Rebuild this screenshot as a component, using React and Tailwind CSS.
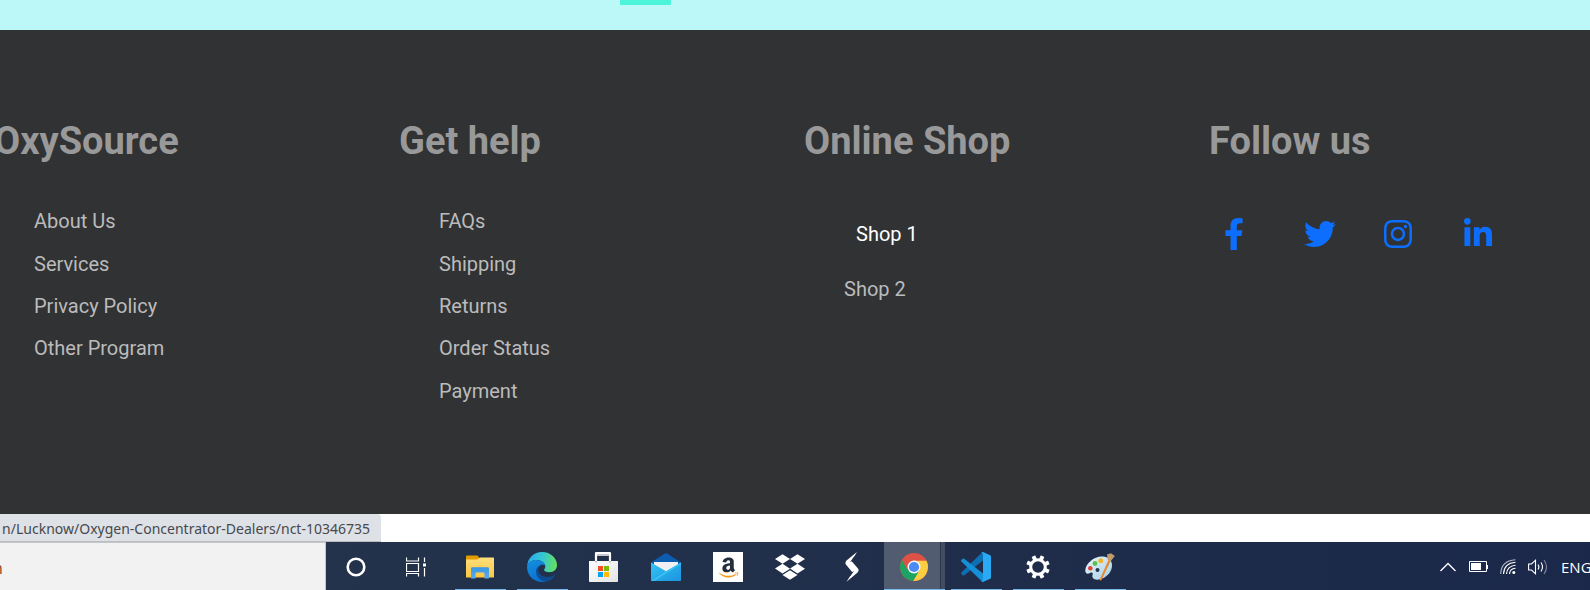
import React from "react";
import { FaFacebookF, FaTwitter, FaInstagram, FaLinkedinIn, FaAmazon, FaDropbox } from "react-icons/fa";

function LinkColumn({ title, links }) {
  return (
    <section>
      <Heading>{title}</Heading>
      <ul className="mt-9 grid h-[212px] grid-rows-5 pl-10">
        {links.map((l) => (
          <li key={l} className="flex items-center">
            <a href="#" className="text-xl leading-7 text-[#bbbbbb]">{l}</a>
          </li>
        ))}
      </ul>
    </section>
  );
}

function Heading({ children }) {
  return <h2 className="pt-0.5 text-[38px] leading-[46px] font-bold text-[#999999]">{children}</h2>;
}

const socials = [
  { name: "Facebook", Icon: FaFacebookF, size: "h-8 w-5" },
  { name: "Twitter", Icon: FaTwitter, size: "h-8 w-8" },
  { name: "Instagram", Icon: FaInstagram, size: "h-8 w-7" },
  { name: "LinkedIn", Icon: FaLinkedinIn, size: "h-8 w-7" },
];

function Cortana() {
  return (
    <svg viewBox="0 0 20 20" className="size-5" fill="none">
      <circle cx="10" cy="10" r="8.3" stroke="#fff" strokeWidth="2.6" />
    </svg>
  );
}

function TaskView() {
  return (
    <svg viewBox="0 0 24 20" className="h-5 w-6" fill="none" stroke="#fff" strokeWidth="1.2">
      <path d="M.5 .5V4H12.500V.5M.5 6.500H12.500V14.500H.5ZM.5 19.500V16.500H12.500V19.500M18.500 .5V5M18.500 11V19.500" />
      <rect x="17" y="6.500" width="3" height="3" fill="#fff" stroke="none" />
    </svg>
  );
}

function Folder() {
  return (
    <svg viewBox="0 0 28 24" className="h-6 w-7">
      <defs>
        <linearGradient id="folder" x1="0" y1="0" x2="0" y2="1">
          <stop offset="0" stopColor="#ffdf7c" />
          <stop offset="1" stopColor="#fbc540" />
        </linearGradient>
        <linearGradient id="folderClip" x1="0" y1="0" x2="0" y2="1">
          <stop offset="0" stopColor="#3a97e0" />
          <stop offset="1" stopColor="#57aef0" />
        </linearGradient>
      </defs>
      <path d="M0 1.500Q0 .5 1 .5H11.500L13.500 3V6H0Z" fill="#e29c00" />
      <path d="M0 4.500H11.500L14 2.500H27.200Q28 2.500 28 3.300V22.500H0Z" fill="url(#folder)" />
      <path d="M5 13.500Q5 12.300 6.200 12.300H21.800Q23 12.300 23 13.500V23.500H18.500V18.500Q18.500 17.500 17.500 17.500H10.500Q9.500 17.500 9.500 18.500V23.500H5Z" fill="url(#folderClip)" />
    </svg>
  );
}

function Edge() {
  return (
    <svg viewBox="0 0 30 30" className="size-[30px]">
      <defs>
        <linearGradient id="edgeTop" x1="0" y1=".4" x2="1" y2=".5">
          <stop offset="0" stopColor="#2aa8e8" />
          <stop offset=".5" stopColor="#35c7d4" />
          <stop offset="1" stopColor="#67e05b" />
        </linearGradient>
        <linearGradient id="edgeLeft" x1=".2" y1="0" x2=".6" y2="1">
          <stop offset="0" stopColor="#148ee0" />
          <stop offset="1" stopColor="#0a70cc" />
        </linearGradient>
        <linearGradient id="edgeLow" x1="0" y1="0" x2="1" y2=".5">
          <stop offset="0" stopColor="#0b4ea0" />
          <stop offset="1" stopColor="#104a8c" />
        </linearGradient>
      </defs>
      <path d="M.2 14C.7 5.800 7 0 15 0C24 0 30 6.500 30 13C30 17.500 26.800 20.200 22.500 20.200C19.200 20.200 17 19 17 18C17 17.200 18.300 16.500 18.300 14.500C18.300 11 14.500 8 9.500 8C5 8 1.500 10.500 .2 14Z" fill="url(#edgeTop)" />
      <path d="M0 15C.7 10.700 4.800 8 9.500 8C14.500 8 18.300 11 18.300 14C16.500 11.500 10.500 13 10.500 18.500C10.500 24 15 29 19.500 29.200C18 29.800 16.500 30 15 30C6.800 30 0 23.500 0 15Z" fill="url(#edgeLeft)" />
      <path d="M12.500 13.400C9.500 18 12 25 20.500 25C23.500 25 26 24 27.500 23C28.300 22.500 28.500 23 28 23.700C25.800 27 22.800 29 19.500 29.500C13 29.500 9 24.500 9 19.500C9 16.500 10.500 14.300 12.500 13.400Z" fill="url(#edgeLow)" />
    </svg>
  );
}

function Store() {
  return (
    <svg viewBox="0 0 30 30" className="size-[30px]">
      <defs>
        <linearGradient id="bag" x1="0" y1="0" x2="1" y2="1">
          <stop offset="0" stopColor="#fff" />
          <stop offset="1" stopColor="#e3e3e3" />
        </linearGradient>
      </defs>
      <path d="M7 9V1.500Q7 1 7.500 1H20.500Q21 1 21 1.500V9" fill="none" stroke="#fff" strokeWidth="2.200" />
      <path d="M8 2H20V4H8Z" fill="#c5c9cf" />
      <path d="M0 9H29V29.200Q29 30 28.200 30H.8Q0 30 0 29.200Z" fill="url(#bag)" />
      <path d="M6 9h2v1.500H6ZM20 9h2v1.500H20Z" fill="#b9bec6" />
      <path d="M9 14h5v5H9Z" fill="#f25022" />
      <path d="M15 14h5v5h-5Z" fill="#7fba00" />
      <path d="M9 20h5v5H9Z" fill="#00a4ef" />
      <path d="M15 20h5v5h-5Z" fill="#ffb900" />
    </svg>
  );
}

function Mail() {
  return (
    <svg viewBox="0 0 30 28" className="h-7 w-[30px]">
      <defs>
        <linearGradient id="mail" x1="0" y1="0" x2="1" y2="1">
          <stop offset="0" stopColor="#35c4f5" />
          <stop offset="1" stopColor="#1b93df" />
        </linearGradient>
      </defs>
      <path d="M0 9.500L13.500 .8Q15 -.1 16.500 .8L30 9.500V14H0Z" fill="#0c5cb0" />
      <path d="M3 9H27V20H3Z" fill="#f1f1f3" />
      <path d="M0 9.500L15 18.300L30 9.500V27.200Q30 28 29.200 28H.8Q0 28 0 27.200Z" fill="url(#mail)" />
      <path d="M.3 28L15 18.300L30 9.500V11L3 28Z" fill="#41cdf7" opacity=".7" />
    </svg>
  );
}

function Amazon() {
  return (
    <span className="grid size-[30px] place-items-center bg-white">
      <FaAmazon className="col-start-1 row-start-1 size-[23px] text-[#222e3e] [clip-path:inset(0_0_28%_0)]" />
      <FaAmazon className="col-start-1 row-start-1 size-[23px] text-[#f8981d] [clip-path:inset(72%_0_0_0)]" />
    </span>
  );
}

function Dropbox() {
  return <FaDropbox className="size-[30px] text-white" />;
}

function Bolt() {
  return (
    <svg viewBox="0 0 14 30" className="h-[30px] w-3.5" fill="#fff">
      <path d="M12 0L1.500 8.500Q-.3 10.500 .9 12.500L7.500 20.500L1.500 29.800L12 21Q14.500 18.700 13 16.500L6.500 9Z" />
      <path d="M5.800 9.800L9.500 4.500M4.800 24L8.200 19.500" stroke="#24324c" strokeWidth="1" />
    </svg>
  );
}

function Chrome() {
  return (
    <svg viewBox="0 0 28 28" className="size-7">
      <circle cx="14" cy="14" r="14" fill="#de5246" />
      <path d="M1.900 7A14 14 0 0 0 13.300 28L20 17.500L14 14L8 17.500Z" fill="#1da463" />
      <path d="M14 7.700H26.500A14 14 0 0 1 13.300 28L19.500 17.200L14 14Z" fill="#ffcd41" />
      <circle cx="14" cy="14" r="6.500" fill="#f4f7fb" />
      <circle cx="14" cy="14" r="5.100" fill="#4c8bf5" />
    </svg>
  );
}

function VSCode() {
  return (
    <svg viewBox="0 0 30 30" className="size-[30px]">
      <path d="M22 0V8.500L3.200 23.200Q2.500 23.700 1.800 23.200L.4 21.900Q-.3 21.200 .4 20.500L20.500 1Z" fill="#0d6fb4" />
      <path d="M22 30V21.500L3.200 6.800Q2.500 6.300 1.800 6.800L.4 8.100Q-.3 8.800 .4 9.500L20.500 29Z" fill="#148fd8" />
      <path d="M22 0L29.200 3.300Q30 3.700 30 4.600V25.400Q30 26.300 29.200 26.700L22 30Q20.800 30 20.300 29Q22 29.500 22 27.500V2.500Q22 .5 20.300 1Q20.800 0 22 0Z" fill="#2aa9f5" />
    </svg>
  );
}

function Gear() {
  return (
    <svg viewBox="0 0 24 24" className="size-6" fill="#fff">
      <circle cx="12" cy="12" r="7.300" fill="none" stroke="#fff" strokeWidth="3" />
      {[22.5, 67.5, 112.5, 157.5, 202.5, 247.5, 292.5, 337.5].map((a) => (
        <rect key={a} x="10" y=".2" width="4" height="4.600" rx=".6" transform={"rotate(" + a + " 12 12)"} />
      ))}
    </svg>
  );
}

function Paint() {
  return (
    <svg viewBox="0 0 30 28" className="h-7 w-[30px]">
      <defs>
        <linearGradient id="palette" x1="0" y1="0" x2="1" y2="1">
          <stop offset="0" stopColor="#e9f6fb" />
          <stop offset="1" stopColor="#a5cfe4" />
        </linearGradient>
      </defs>
      <path d="M18 3.500C9 3 .8 10.500 .3 17C0 20.500 2.500 21.500 5 20C7 18.800 8.500 20 7.500 22C6.500 25 9.500 27.500 14 26.500C22 25 27.500 18 27 11.500C26.500 6.500 23 3.800 18 3.500Z" fill="url(#palette)" />
      <circle cx="12.500" cy="17" r="2" fill="#23344c" />
      <circle cx="5.300" cy="15.200" r="2.300" fill="#e2433a" />
      <circle cx="10" cy="10.500" r="2.400" fill="#5bbf4c" />
      <circle cx="15.800" cy="7.800" r="2.500" fill="#f3b42a" />
      <path d="M23.500 7L25.500 8L16.500 27Q15 28.500 14.800 26.500Z" fill="#e8862c" />
      <path d="M22 1.500L26 .2L29.800 3L25.500 8.500L22.800 6.800Z" fill="#c39a6b" />
    </svg>
  );
}

const apps = [
  { name: "Cortana", Icon: Cortana },
  { name: "Task View", Icon: TaskView },
  { name: "File Explorer", Icon: Folder, open: true },
  { name: "Microsoft Edge", Icon: Edge, open: true },
  { name: "Microsoft Store", Icon: Store },
  { name: "Mail", Icon: Mail },
  { name: "Amazon", Icon: Amazon },
  { name: "Dropbox", Icon: Dropbox },
  { name: "Bolt", Icon: Bolt },
  { name: "Google Chrome", Icon: Chrome, active: true },
  { name: "Visual Studio Code", Icon: VSCode, open: true },
  { name: "Settings", Icon: Gear, open: true },
  { name: "Paint", Icon: Paint, open: true },
];

function AppButton({ name, Icon, open, active }) {
  if (active) {
    return (
      <button aria-label={name} className="ml-px flex w-[61px] shrink-0 border-b border-[#76b9ed]">
        <span className="flex h-full flex-1 items-center justify-center bg-[#525c70] pt-0.5 pl-1">
          <Icon />
        </span>
        <span className="h-full w-[5px] border-l border-[#2b364b] bg-[#434c60]" />
      </button>
    );
  }
  return (
    <button aria-label={name} className="flex w-[62px] shrink-0 flex-col items-center">
      <span className="flex w-full flex-1 items-center justify-center pt-[3px]">
        <Icon />
      </span>
      <span className={open ? "h-px w-[51px] bg-[#76b9ed]" : "h-px w-[51px]"} />
    </button>
  );
}

function Tray() {
  return (
    <div className="flex w-[150px] shrink-0 items-center overflow-hidden pt-0.5 text-white">
      <button aria-label="Show hidden icons" className="shrink-0">
        <svg viewBox="0 0 16 10" className="h-2.5 w-4" fill="none" stroke="#fff" strokeWidth="1.300">
          <path d="M.5 9L8 1.500L15.500 9" />
        </svg>
      </button>
      <svg viewBox="0 0 19 12" className="ml-[13px] h-3 w-[19px] shrink-0" fill="none" stroke="#fff">
        <path d="M.5 .5H17.500V10.500H.5Z" />
        <path d="M2 2H12V9H2Z" fill="#fff" stroke="none" />
        <path d="M18.500 4V8" />
      </svg>
      <svg viewBox="0 0 16 16" className="ml-3 size-4 shrink-0" fill="none" stroke="#fff" strokeWidth="1.100">
        <circle cx="13.800" cy="13.500" r="1.500" fill="#fff" stroke="none" />
        <path d="M9.500 15Q9.800 9.800 15.500 9.300M6.500 15Q7 7 15.500 6.200M3.500 15Q4 4.200 15.500 3.300" />
        <path d="M.7 15Q1 1.700 15.500 .7" opacity=".65" />
      </svg>
      <svg viewBox="0 0 20 18" className="ml-3 h-[18px] w-5 shrink-0" fill="none" stroke="#fff" strokeWidth="1.100">
        <path d="M.6 6H3.500L7.500 2.200V15.800L3.500 12H.6Z" />
        <path d="M10 6.500Q11.800 9 10 11.500M13 4.500Q16 9 13 13.500" />
        <path d="M16 2Q21 9 16 16" opacity=".45" />
      </svg>
      <span className="ml-[13px] font-['Open_Sans',sans-serif] text-[15px] leading-5">ENG</span>
    </div>
  );
}

export default function App() {
  return (
    <div className="min-h-screen overflow-hidden bg-white font-['Roboto',sans-serif]">
      <div className="h-[30px] bg-[#bcf8f8] pl-[39%]">
        <div className="h-[5px] w-[51px] bg-[#4cf4da]" />
      </div>

      <footer className="bg-[#313234] pt-[86px] pb-[102px]">
        <div className="-mr-6 -ml-1.5 grid grid-cols-4">
          <LinkColumn title="OxySource" links={["About Us", "Services", "Privacy Policy", "Other Program"]} />
          <LinkColumn title="Get help" links={["FAQs", "Shipping", "Returns", "Order Status", "Payment"]} />
          <section>
            <Heading>Online Shop</Heading>
            <ul className="mt-[42px] pl-10 text-xl">
              <li className="flex h-[55px] items-center pl-3">
                <a href="#" className="text-white">Shop 1</a>
              </li>
              <li className="flex h-[55px] items-center">
                <a href="#" className="text-[#bbbbbb]">Shop 2</a>
              </li>
            </ul>
          </section>
          <section>
            <Heading>Follow us</Heading>
            <div className="mt-[54px] flex pl-[15px]">
              {socials.map(({ name, Icon, size }) => (
                <a key={name} href="#" aria-label={name} className="w-20 text-[#0d6efd]">
                  <Icon className={size} />
                </a>
              ))}
            </div>
          </section>
        </div>
      </footer>

      <div className="flex h-7">
        <div className="flex w-[381px] items-center justify-end overflow-hidden rounded-tr-sm border-b border-[#babcbf] bg-[#dee1e6] pt-0.5 pr-[11px] font-['Noto_Sans',sans-serif] text-sm whitespace-nowrap text-[#46494d]">
          n/Lucknow/Oxygen-Concentrator-Dealers/nct-10346735
        </div>
      </div>

      <div className="flex h-12 bg-linear-to-r from-[#24334b] from-20% to-[#1b284a]">
        <input
          aria-label="Search"
          defaultValue="n"
          className="-mr-px w-[326px] shrink-0 border-t border-r border-[#c4c6c9] bg-[#f2f2f2] pt-0.5 -indent-[7px] font-['Open_Sans',sans-serif] text-base text-[#93401c] outline-none"
        />
        <nav className="flex flex-1">
          {apps.map((a) => (
            <AppButton key={a.name} {...a} />
          ))}
        </nav>
        <Tray />
      </div>
    </div>
  );
}
